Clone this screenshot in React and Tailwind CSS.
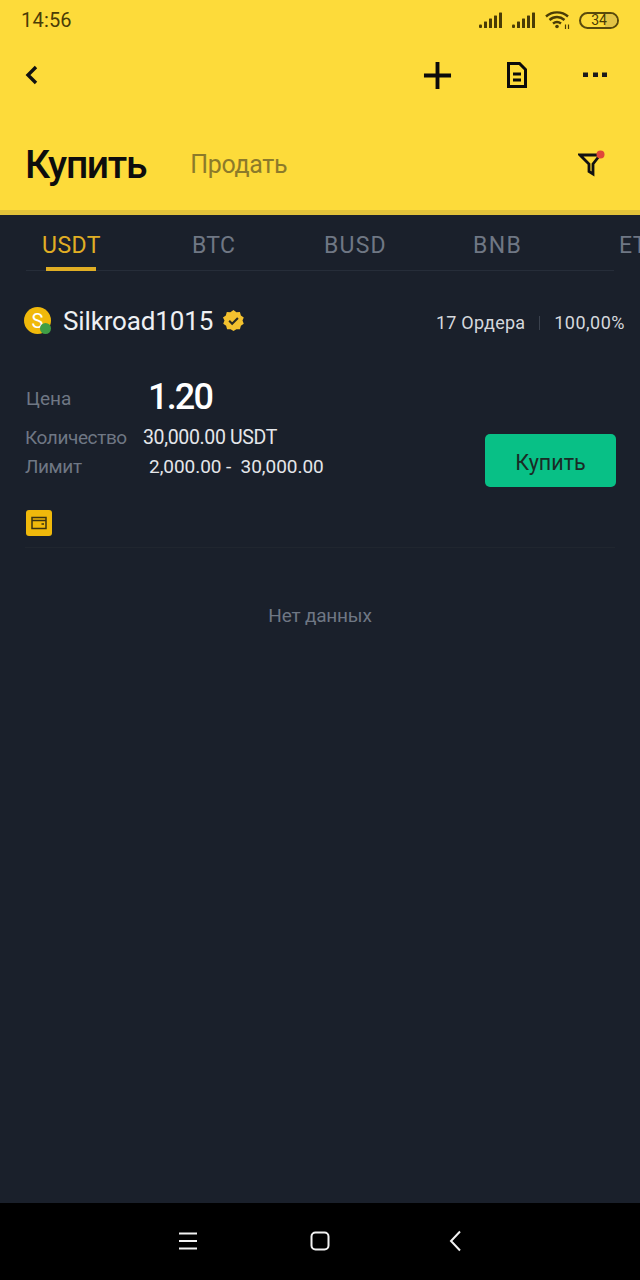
const font = { fontFamily: '"Roboto", "Noto Sans", sans-serif' };

function Signal() {
  return (
    <svg width="25" height="17" viewBox="0 0 25 17" fill="#4a3c06">
      <rect x="0" y="12.5" width="3" height="3.5" rx="1" />
      <rect x="5" y="9.5" width="3" height="6.5" rx="0.5" />
      <rect x="10" y="6.5" width="3" height="9.5" rx="0.5" />
      <rect x="15" y="3.5" width="3" height="12.5" rx="0.5" />
      <rect x="20" y="0.5" width="3" height="15.5" rx="0.5" />
    </svg>
  );
}

function Wifi() {
  return (
    <svg width="26" height="20" viewBox="0 0 26 20" fill="none" stroke="#4a3c06" strokeWidth="2.4">
      <path d="M1 6.5C7 1 17 1 23 6.5" />
      <path d="M4.5 10C9 6 15 6 19.5 10" />
      <path d="M8 13.5C10.5 11.5 13.5 11.5 16 13.5" />
      <circle cx="12" cy="16.5" r="1.8" fill="#4a3c06" stroke="none" />
      <path d="M20.5 14.5V19M23.5 14.5V19" strokeWidth="1.2" />
    </svg>
  );
}

function Tab({ children, active, className }) {
  return (
    <div className={`absolute top-[1px] text-[23px] leading-[30px] ${active ? 'text-[#e0ae24]' : 'text-[#6f7784]'} ${className}`}>
      {children}
    </div>
  );
}

export default function App() {
  return (
    <div style={font} className="w-[640px] h-[1280px] flex flex-col bg-[#1a202b] overflow-hidden">
      <header className="h-[215px] shrink-0 bg-[#fddb3a] border-b-[5px] border-[#e2c23a] flex flex-col">
        <div className="h-[40px] px-[21px] flex items-center justify-between">
          <span className="text-[20px] text-[#4a3c06] tracking-[0.2px]">14:56</span>
          <div className="flex items-center gap-[8px]">
            <Signal />
            <Signal />
            <Wifi />
            <div className="w-[40px] h-[17px] rounded-[9px] border-2 border-[#5a4a0c] overflow-hidden relative flex items-center justify-center">
              <div className="absolute inset-y-0 right-0 w-[12px] bg-[#e3c445]" />
              <span className="relative text-[14px] text-[#4a3c06] leading-[13px]">34</span>
            </div>
          </div>
        </div>
        <div className="h-[70px] flex items-center justify-between pl-[23px] pr-[33px]">
          <svg width="16" height="22" viewBox="0 0 16 22" fill="none" stroke="#111" strokeWidth="3.4">
            <path d="M13 3L5 11L13 19" />
          </svg>
          <div className="flex items-center">
            <svg width="29" height="29" viewBox="0 0 30 30" fill="none" stroke="#0b0b0b" strokeWidth="4">
              <path d="M15 1V29M1 15H29" />
            </svg>
            <svg className="ml-[55px]" width="20" height="26" viewBox="0 0 20 26" fill="none" stroke="#0b0b0b" strokeWidth="3">
              <path d="M1.500 1.500H12.500L18.500 7.500V24.500H1.500Z" />
              <path d="M6 12H14M6 18H14" />
            </svg>
            <svg className="ml-[56px]" width="24" height="6" viewBox="0 0 24 6" fill="#1a1a1a">
              <rect x="0" y="0.5" width="5" height="4.500" />
              <rect x="10" y="0.5" width="5" height="4.500" />
              <rect x="19" y="0.5" width="5" height="4.500" />
            </svg>
          </div>
        </div>
        <div className="flex-1 flex items-start pl-[25px] pr-[34px] pt-[30px]">
          <span className="text-[39px] leading-[50px] font-medium tracking-[-1.3px] text-[#0d0d0d]">Купить</span>
          <span className="ml-[44px] mt-[9px] text-[25px] leading-[32px] tracking-[-0.3px] text-[#8c7a2a]">Продать</span>
          <svg className="ml-auto mt-[10px]" width="28" height="28" viewBox="0 0 28 28" fill="none">
            <path d="M2 5H22L15 14V24L11 21.5V14Z" stroke="#111" strokeWidth="2.800" strokeLinejoin="miter" />
            <circle cx="22.5" cy="4.5" r="4" fill="#e0473a" />
          </svg>
        </div>
      </header>

      <main className="flex-1 flex flex-col">
        <div className="relative h-[56px] mx-[26px] pt-[15px] border-b border-[#262d39] shrink-0">
          <div className="relative h-[30px]">
            <Tab active className="left-[16px] tracking-[0.5px]">USDT</Tab>
            <Tab className="left-[166px] tracking-[0.3px]">BTC</Tab>
            <Tab className="left-[298px] tracking-[1.2px]">BUSD</Tab>
            <Tab className="left-[447px] tracking-[1.4px]">BNB</Tab>
            <Tab className="left-[593px] tracking-[0.5px]">ETH</Tab>
          </div>
          <div className="absolute left-[20px] bottom-[-1px] w-[50px] h-[4px] bg-[#e0ae24]" />
        </div>

        <div className="pl-[24px] pr-[15px] pt-[33px] flex items-center justify-between h-[66px]">
          <div className="flex items-center">
            <div className="relative w-[27px] h-[27px] rounded-full bg-[#f0b90b] flex items-center justify-center text-white text-[20px]">
              S
              <div className="absolute right-0 bottom-0 w-[11px] h-[11px] rounded-full bg-[#3f9e45]" />
            </div>
            <span className="ml-[12px] text-[26px] leading-[32px] tracking-[-0.15px] text-[#eef0f3]">Silkroad1015</span>
            <svg className="ml-[9px]" width="23" height="23" viewBox="0 0 24 24">
              <path d="M12 1l3 2.3 3.7-.2 1 3.6 3 2.2-1.3 3.1 1.3 3.5-3 2-1 3.6-3.7-.1L12 23l-3-2-3.700.1-1-3.600-3-2 1.300-3.500L1 8.900l3-2.200 1-3.600 3.700.2z" fill="#f3c12f" />
              <path d="M7.500 12.200l3.100 3.100 6-6" fill="none" stroke="#2a2a22" strokeWidth="2.200" />
            </svg>
          </div>
          <div className="flex items-center pt-[4px] text-[18px] leading-[24px] text-[#d5d8dd]">
            <span className="tracking-[0.2px]">17 Ордера</span>
            <span className="mx-[14px] w-px h-[14px] bg-[#3a414d]" />
            <span className="tracking-[0.5px]">100,00%</span>
          </div>
        </div>

        <div className="relative mx-[25px] pt-[38px] h-[211px] border-b border-[#20262f] shrink-0">
          <div className="flex items-center h-[44px]">
            <span className="w-[123px] pl-[1px] pt-[4px] text-[19px] text-[#6f7784]">Цена</span>
            <span className="text-[36px] leading-[44px] font-medium text-white tracking-[-1.800px]">1.20</span>
          </div>
          <div className="flex items-center h-[30px] mt-[4px]">
            <span className="w-[118px] text-[19px] tracking-[-0.4px] text-[#6f7784]">Количество</span>
            <span className="text-[19.500px] tracking-[-0.35px] text-[#e4e6ea]">30,000.00 USDT</span>
          </div>
          <div className="flex items-center h-[28px]">
            <span className="w-[124px] text-[19px] tracking-[-0.4px] text-[#6f7784]">Лимит</span>
            <span className="text-[19px] text-[#e4e6ea] whitespace-pre tracking-[-0.05px]">2,000.00 -  30,000.00</span>
          </div>
          <div className="mt-[29px] ml-px w-[26px] h-[26px] rounded-[3px] bg-[#f0b90b] flex items-center justify-center">
            <svg width="16" height="14" viewBox="0 0 16 14" fill="none" stroke="#3a3212" strokeWidth="1.500">
              <rect x="1" y="1.500" width="14" height="11" />
              <path d="M1 4.500H15M10.500 8H13" />
            </svg>
          </div>
          <button className="absolute right-[-1px] top-[97px] w-[131px] h-[53px] pt-[5px] rounded-[5px] bg-[#08c086] text-[#1a2b25] text-[21.500px]">
            Купить
          </button>
        </div>

        <div className="pt-[56px] text-center text-[19px] leading-[24px] tracking-[-0.2px] text-[#6f7784]">Нет данных</div>
      </main>

      <nav className="h-[77px] shrink-0 bg-black flex items-center justify-center pb-[2px]">
        <svg width="18" height="18" viewBox="0 0 18 18" stroke="#f2f2f2" strokeWidth="2">
          <path d="M0 1.500H18M0 9H18M0 16.500H18" />
        </svg>
        <svg className="ml-[113px]" width="20" height="20" viewBox="0 0 20 20" fill="none" stroke="#f2f2f2" strokeWidth="2">
          <rect x="1.500" y="1.500" width="17" height="17" rx="4" />
        </svg>
        <svg className="ml-[119px]" width="12" height="22" viewBox="0 0 12 22" fill="none" stroke="#f2f2f2" strokeWidth="2">
          <path d="M11 1.500L2 11L11 20.500" />
        </svg>
      </nav>
    </div>
  );
}
